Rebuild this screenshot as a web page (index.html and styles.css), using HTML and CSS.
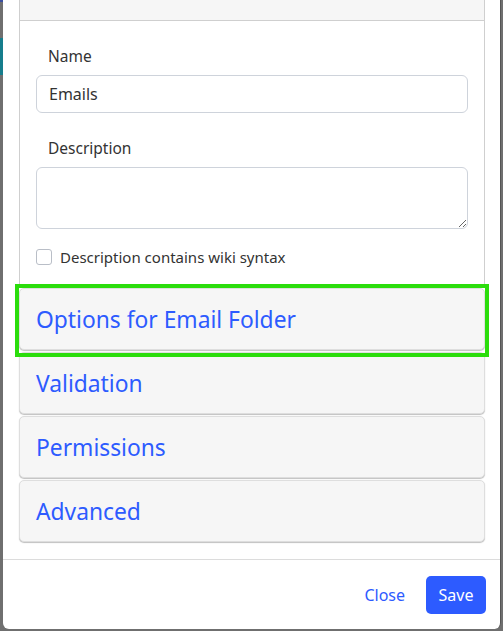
FILE: index.html
```html
<!DOCTYPE html>
<html lang="en">
<head>
<meta charset="utf-8">
<title>Edit Folder</title>
<link rel="stylesheet" href="styles.css">
</head>
<body>
<div class="backdrop-left">
  <div class="bd-blue"></div>
  <div class="bd-gap"></div>
  <div class="bd-teal"></div>
</div>
<div class="modal">
  <div class="modal-body">
    <div class="card">
      <div class="card-header"></div>
      <div class="card-body">
        <label class="field-label">Name</label>
        <input class="form-input" type="text" value="Emails">
        <label class="field-label desc-label">Description</label>
        <textarea class="form-textarea"></textarea>
        <div class="check-row">
          <span class="checkbox"></span>
          <span class="check-label">Description contains wiki syntax</span>
        </div>
      </div>
    </div>
    <div class="accordion">
      <div class="acc-item highlighted"><span class="acc-title">Options for Email Folder</span></div>
      <div class="acc-item"><span class="acc-title">Validation</span></div>
      <div class="acc-item"><span class="acc-title">Permissions</span></div>
      <div class="acc-item"><span class="acc-title">Advanced</span></div>
    </div>
  </div>
  <div class="modal-footer">
    <button class="btn btn-link">Close</button>
    <button class="btn btn-primary">Save</button>
  </div>
</div>
</body>
</html>
```
FILE: styles.css
```css
* { box-sizing: border-box; }
html, body { margin: 0; padding: 0; }
body {
  width: 503px;
  height: 631px;
  overflow: hidden;
  background: #6f6f6f;
  display: flex;
  align-items: flex-start;
  font-family: "Noto Sans", "Open Sans", sans-serif;
  color: #333;
}
.backdrop-left {
  width: 3px;
  flex: none;
  display: flex;
  flex-direction: column;
}
.bd-blue { height: 2px; background: #3b4fa0; }
.bd-gap { height: 36px; }
.bd-teal { height: 37px; background: #167d8c; }
.modal {
  width: 498px;
  height: 629px;
  flex: none;
  background: #fff;
  border-radius: 0 0 6px 6px;
  border-right: 1px solid #555;
  display: flex;
  flex-direction: column;
}
.modal-body {
  padding: 0 15px 17px 16px;
  flex: 1;
}
.card {
  border: 1px solid #cfcfcf;
  border-top: none;
  border-bottom: none;
}
.card-header {
  height: 21px;
  background: #f6f6f6;
  border-bottom: 1px solid #cfcfcf;
}
.card-body {
  padding: 24px 16px 17px 16px;
  display: flex;
  flex-direction: column;
}
.field-label {
  font-size: 15.5px;
  line-height: 22px;
  padding-left: 12px;
  color: #333;
}
.desc-label { margin-top: 24px; }
.form-input {
  margin-top: 8px;
  height: 38px;
  border: 1px solid #ced3db;
  border-radius: 6px;
  padding: 0 12px;
  font-family: inherit;
  font-size: 16px;
  color: #333;
  background: #fff;
}
.form-textarea {
  margin-top: 8px;
  height: 62px;
  border: 1px solid #ced3db;
  border-radius: 6px;
  resize: vertical;
  font-family: inherit;
  font-size: 16px;
  background: #fff;
}
.check-row {
  margin-top: 17px;
  display: flex;
  align-items: center;
  gap: 8px;
  height: 22px;
}
.checkbox {
  width: 16px;
  height: 16px;
  border: 1px solid #b9bec7;
  border-radius: 3px;
  background: #fff;
}
.check-label {
  font-size: 15px;
  color: #333;
}
.accordion {
  margin-top: 3px;
  display: flex;
  flex-direction: column;
  gap: 2px;
}
.acc-item {
  position: relative;
  height: 62px;
  background: #f6f6f6;
  border: 1px solid #dedede;
  border-radius: 5px;
  box-shadow: 0 1px 1px rgba(0,0,0,0.25);
  display: flex;
  align-items: center;
  padding-left: 16px;
}
.acc-title {
  color: #2d5bff;
  font-size: 22.8px;
}
.highlighted::after {
  content: "";
  position: absolute;
  left: -5px;
  right: -5px;
  top: -5px;
  bottom: -8px;
  border: 4px solid #2bdd0c;
  pointer-events: none;
  z-index: 2;
}
.modal-footer {
  border-top: 1px solid #dcdcdc;
  height: 70px;
  display: flex;
  justify-content: flex-end;
  align-items: flex-start;
  padding: 16px 14px 0 0;
  gap: 9px;
}
.btn {
  height: 38px;
  font-family: inherit;
  font-size: 16px;
  border: none;
  border-radius: 5px;
  padding: 0 12px;
  cursor: pointer;
}
.btn-link {
  background: transparent;
  color: #2d5bff;
}
.btn-primary {
  background: #2d5bff;
  color: #fff;
  width: 60px;
  padding: 0;
}
```
